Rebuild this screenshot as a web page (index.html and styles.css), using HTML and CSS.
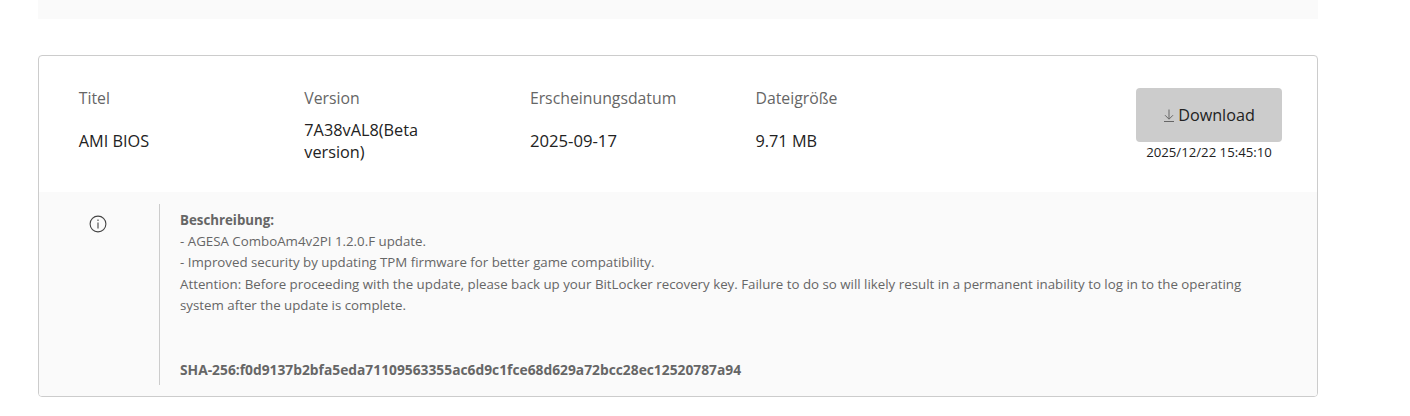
FILE: index.html
```html
<!DOCTYPE html>
<html lang="en">
<head>
  <meta charset="UTF-8">
  <meta name="viewport" content="width=device-width, initial-scale=1.0">
  <title>BIOS Download</title>
  <link rel="stylesheet" href="styles.css">
</head>
<body>
  <div class="top-band"></div>

  <div class="card">
    <div class="card-head">
      <div class="col">
        <p class="label">Titel</p>
        <p class="value">AMI BIOS</p>
      </div>
      <div class="col">
        <p class="label">Version</p>
        <p class="value">7A38vAL8(Beta version)</p>
      </div>
      <div class="col">
        <p class="label">Erscheinungsdatum</p>
        <p class="value value-date">2025-09-17</p>
      </div>
      <div class="col">
        <p class="label">Dateigröße</p>
        <p class="value">9.71 MB</p>
      </div>
      <div class="download">
        <button class="download-btn">
          <svg class="down-icon" width="12" height="13" viewBox="0 0 12 13" fill="none" stroke="#666" stroke-width="1">
            <path d="M6 0.5V10M2 6.2L6 10.2L10 6.2M1 12.5H11"/>
          </svg>Download
        </button>
        <span class="stamp">2025/12/22 15:45:10</span>
      </div>
    </div>

    <div class="card-detail">
      <div class="info-cell">
        <svg width="18" height="18" viewBox="0 0 18 18" fill="none" stroke="#444" stroke-width="1.1">
          <circle cx="9" cy="9" r="7.9"/>
          <path d="M9 7.5V13.5"/>
          <path d="M9 4.5V6"/>
        </svg>
      </div>
      <div class="desc">
        <p class="desc-title">Beschreibung:</p>
        <p>- AGESA ComboAm4v2PI 1.2.0.F update.</p>
        <p>- Improved security by updating TPM firmware for better game compatibility.</p>
        <p>Attention: Before proceeding with the update, please back up your BitLocker recovery key. Failure to do so will likely result in a permanent inability to log in to the operating system after the update is complete.</p>
        <p class="sha">SHA-256:f0d9137b2bfa5eda71109563355ac6d9c1fce68d629a72bcc28ec12520787a94</p>
      </div>
    </div>
  </div>
</body>
</html>
```

FILE: styles.css
```css
* {
  margin: 0;
  padding: 0;
  box-sizing: border-box;
}

body {
  font-family: 'Open Sans', 'Noto Sans', sans-serif;
  background-color: #fff;
  color: #333;
  padding: 0 92px 0 38px;
}

.top-band {
  height: 19px;
  background-color: #fafafa;
  margin-bottom: 36px;
}

/* Card */
.card {
  height: 342px;
  border: 1px solid #ccc;
  border-radius: 4px;
  overflow: hidden;
  display: flex;
  flex-direction: column;
}

.card-head {
  height: 136px;
  display: flex;
  padding: 31px 35px 0 39.7px;
}

.col {
  width: 225.6px;
  padding-right: 60px;
}

.label {
  font-size: 15.8px;
  line-height: 22px;
  color: #666;
  margin-bottom: 10px;
}

.value {
  font-size: 16.3px;
  line-height: 22px;
  color: #222;
  min-height: 44px;
  display: flex;
  align-items: center;
}

.value-date {
  font-size: 16.7px;
}

.download {
  margin-left: auto;
  width: 146px;
  margin-top: 1px;
  display: flex;
  flex-direction: column;
  align-items: center;
}

.download-btn {
  width: 146px;
  height: 54px;
  background-color: #ccc;
  border: none;
  border-radius: 4px;
  font-family: inherit;
  font-size: 16.2px;
  color: #222;
  display: flex;
  align-items: center;
  justify-content: center;
}

.down-icon {
  margin-right: 3px;
}

.stamp {
  font-size: 13.2px;
  line-height: 20px;
  color: #222;
  white-space: nowrap;
}

/* Description */
.card-detail {
  flex-grow: 1;
  background-color: #fafafa;
  display: flex;
  padding: 12px 0 11px;
}

.info-cell {
  width: 121px;
  flex-shrink: 0;
  border-right: 1px solid #ccc;
  padding: 11px 0 0 50px;
}

.desc {
  flex-grow: 1;
  padding: 6px 60px 0 20px;
  font-size: 13.3px;
  line-height: 21.2px;
  color: #666;
}

.desc-title {
  font-weight: bold;
}

.sha {
  margin-top: 43px;
  font-size: 13.8px;
  font-weight: bold;
}
```
